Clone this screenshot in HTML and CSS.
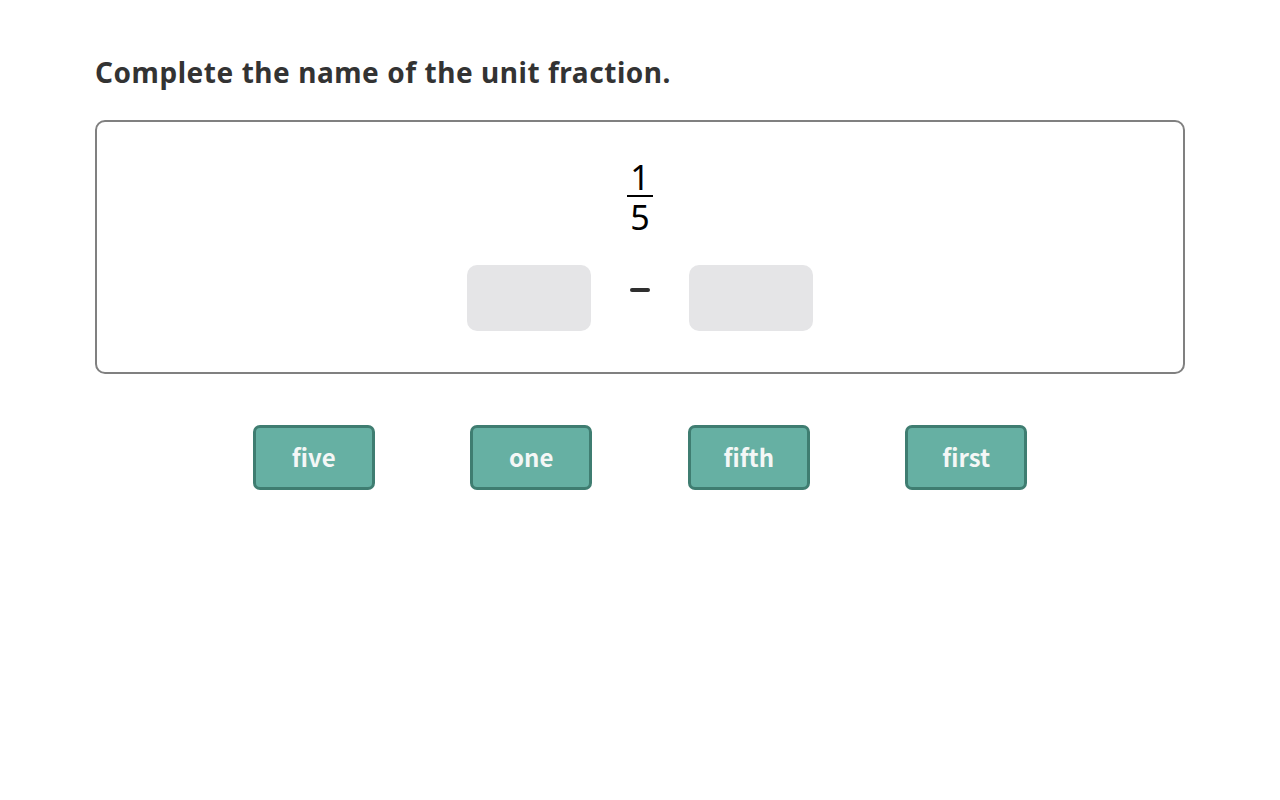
FILE: index.html
```html
<!DOCTYPE html>
<html lang="en">
<head>
<meta charset="utf-8">
<title>Unit fraction</title>
<link rel="stylesheet" href="styles.css">
</head>
<body>
<main class="page">
  <h1 class="title">Complete the name of the unit fraction.</h1>
  <section class="card">
    <div class="fraction">
      <span class="num">1</span>
      <span class="bar"></span>
      <span class="den">5</span>
    </div>
    <div class="answer">
      <div class="blank"></div>
      <div class="dash"></div>
      <div class="blank"></div>
    </div>
  </section>
  <div class="choices">
    <div class="slot"><button class="chip">five</button></div>
    <div class="slot"><button class="chip">one</button></div>
    <div class="slot"><button class="chip">fifth</button></div>
    <div class="slot"><button class="chip">first</button></div>
  </div>
</main>
</body>
</html>
```

FILE: styles.css
```css
html, body {
  margin: 0;
  padding: 0;
  background: #ffffff;
}
body {
  font-family: "Noto Sans", "Noto Sans CJK KR", sans-serif;
  color: #333333;
}
.page {
  width: 1090px;
  margin: 0 auto;
  padding-top: 52px;
}
.title {
  margin: 0;
  font-size: 28px;
  font-weight: 700;
  line-height: 40px;
  color: #333333;
  letter-spacing: 0.55px;
}
.card {
  margin-top: 28px;
  height: 254px;
  box-sizing: border-box;
  border: 2px solid #808080;
  border-radius: 10px;
  display: flex;
  flex-direction: column;
  align-items: center;
  padding-top: 40px;
}
.fraction {
  display: flex;
  flex-direction: column;
  align-items: center;
  font-family: "Noto Sans", "Open Sans", sans-serif;
  font-weight: 400;
  font-size: 34px;
  color: #000000;
  line-height: 30px;
}
.bar {
  width: 26px;
  height: 2px;
  background: #000000;
  margin: 3px 0 5px;
}
.answer {
  margin-top: 33px;
  display: flex;
  align-items: center;
  gap: 39px;
}
.blank {
  width: 124px;
  height: 66px;
  background: #e5e5e7;
  border-radius: 10px;
}
.dash {
  width: 20px;
  height: 4px;
  background: #2f2f2f;
  border-radius: 2px;
  margin-top: -16px;
}
.choices {
  width: 870px;
  margin: 51px auto 0;
  display: grid;
  grid-template-columns: repeat(4, 1fr);
}
.slot {
  display: flex;
  justify-content: center;
}
.chip {
  width: 122px;
  height: 65px;
  box-sizing: border-box;
  background: #66b0a3;
  border: 3px solid #3f7d71;
  border-radius: 7px;
  color: #f4f7f6;
  font-family: "Noto Sans CJK KR", "Noto Sans", sans-serif;
  font-weight: 700;
  font-size: 24px;
  padding: 0 0 2px;
  cursor: pointer;
}
```
